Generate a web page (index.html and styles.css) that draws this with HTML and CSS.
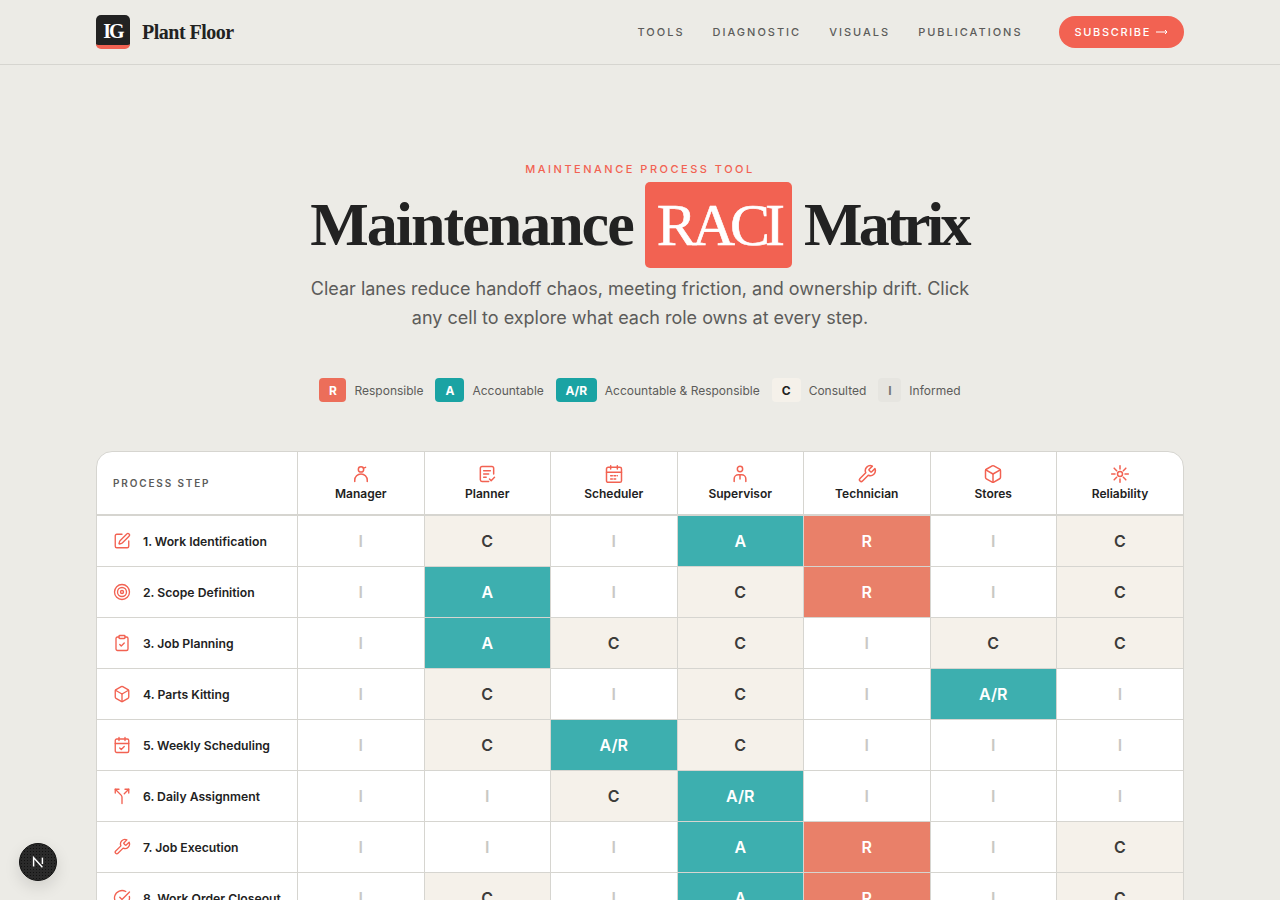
FILE: index.html

```html
<!doctype html>
<html lang="en">
<head>
    <meta charset="UTF-8">
    <meta name="viewport" content="width=device-width, initial-scale=1.0">
    <title>Maintenance RACI Matrix</title>
    <link rel="stylesheet" href="styles.css">
</head>
<body>

<header class="topbar">
    <a class="brand" href="#">
        <span class="brand-mark">IG</span>
        <span class="brand-name">Plant Floor</span>
    </a>
    <nav class="nav">
        <a href="#">TOOLS</a>
        <a href="#">DIAGNOSTIC</a>
        <a href="#">VISUALS</a>
        <a href="#">PUBLICATIONS</a>
        <a class="subscribe" href="#">SUBSCRIBE
            <svg class="subscribe-arrow" viewBox="0 0 12 8"><path d="M0 4h11M9 2l2 2-2 2"/></svg>
        </a>
    </nav>
</header>

<section class="hero">
    <p class="eyebrow">MAINTENANCE PROCESS TOOL</p>
    <h1 class="title"><span class="word-long">Maintenance</span> <span class="title-mark">RACI</span> <span class="word-short">Matrix</span></h1>
    <p class="lead">Clear lanes reduce handoff chaos, meeting friction, and ownership drift. Click any cell to explore what each role owns at every step.</p>
</section>

<div class="legend">
    <span class="chip chip-r">R</span><span class="legend-label">Responsible</span>
    <span class="chip chip-a">A</span><span class="legend-label">Accountable</span>
    <span class="chip chip-a chip-wide">A/R</span><span class="legend-label">Accountable &amp; Responsible</span>
    <span class="chip chip-c">C</span><span class="legend-label">Consulted</span>
    <span class="chip chip-i">I</span><span class="legend-label">Informed</span>
</div>

<main class="matrix-wrap">
    <table class="matrix">
        <thead>
        <tr>
            <th class="step-head">PROCESS STEP</th>
            <th><svg class="icon" viewBox="0 0 24 24"><circle cx="12" cy="6.500" r="3.200"/><path d="M15 5l2.500-1"/><path d="M4.500 21v-1.500a7.500 7.500 0 0 1 15 0v1.500"/></svg>Manager</th>
            <th><svg class="icon" viewBox="0 0 24 24"><path d="M20 12V5a2 2 0 0 0-2-2H6a2 2 0 0 0-2 2v14a2 2 0 0 0 2 2h8"/><path d="M8 8h8M8 12h6M8 16h3"/><path d="m15 18 2 2 4-4"/></svg>Planner</th>
            <th><svg class="icon" viewBox="0 0 24 24"><path d="M8 2v4M16 2v4"/><rect x="3" y="4" width="18" height="18" rx="2"/><path d="M3 10h18M8 14h2M12 14h2M16 14h.01M8 18h2M12 18h2"/></svg>Scheduler</th>
            <th><svg class="icon" viewBox="0 0 24 24"><circle cx="12" cy="6" r="3.200"/><path d="M5 21v-3a5 5 0 0 1 5-5h4a5 5 0 0 1 5 5v3"/><path d="M12 13v5"/></svg>Supervisor</th>
            <th><svg class="icon" viewBox="0 0 24 24"><use href="#i-wrench"/></svg>Technician</th>
            <th><svg class="icon" viewBox="0 0 24 24"><use href="#i-box"/></svg>Stores</th>
            <th><svg class="icon" viewBox="0 0 24 24"><circle cx="12" cy="12" r="3"/><path d="M12 2v4M12 18v4M2 12h4M18 12h4M5 5l3 3M16 16l3 3M5 19l3-3M16 8l3-3"/></svg>Reliability</th>
        </tr>
        </thead>
        <tbody>
        <tr>
            <td class="step"><div class="step-in"><svg class="icon step-icon" viewBox="0 0 24 24"><path d="M12 3H5a2 2 0 0 0-2 2v14a2 2 0 0 0 2 2h14a2 2 0 0 0 2-2v-7"/><path d="M18.375 2.625a1 1 0 0 1 3 3l-9.013 9.014a2 2 0 0 1-.853.505l-2.873.84a.5.5 0 0 1-.62-.62l.84-2.873a2 2 0 0 1 .506-.852z"/></svg>1. Work Identification</div></td>
            <td class="i">I</td><td class="c">C</td><td class="i">I</td><td class="a">A</td><td class="r">R</td><td class="i">I</td><td class="c">C</td>
        </tr>
        <tr>
            <td class="step"><div class="step-in"><svg class="icon step-icon" viewBox="0 0 24 24"><circle cx="12" cy="12" r="10"/><circle cx="12" cy="12" r="6"/><circle cx="12" cy="12" r="2"/></svg>2. Scope Definition</div></td>
            <td class="i">I</td><td class="a">A</td><td class="i">I</td><td class="c">C</td><td class="r">R</td><td class="i">I</td><td class="c">C</td>
        </tr>
        <tr>
            <td class="step"><div class="step-in"><svg class="icon step-icon" viewBox="0 0 24 24"><rect x="8" y="2" width="8" height="4" rx="1"/><path d="M16 4h2a2 2 0 0 1 2 2v14a2 2 0 0 1-2 2H6a2 2 0 0 1-2-2V6a2 2 0 0 1 2-2h2"/><path d="m9 14 2 2 4-4"/></svg>3. Job Planning</div></td>
            <td class="i">I</td><td class="a">A</td><td class="c">C</td><td class="c">C</td><td class="i">I</td><td class="c">C</td><td class="c">C</td>
        </tr>
        <tr>
            <td class="step"><div class="step-in"><svg class="icon step-icon" viewBox="0 0 24 24"><use href="#i-box"/></svg>4. Parts Kitting</div></td>
            <td class="i">I</td><td class="c">C</td><td class="i">I</td><td class="c">C</td><td class="i">I</td><td class="a">A/R</td><td class="i">I</td>
        </tr>
        <tr>
            <td class="step"><div class="step-in"><svg class="icon step-icon" viewBox="0 0 24 24"><path d="M8 2v4M16 2v4"/><rect x="3" y="4" width="18" height="18" rx="2"/><path d="M3 10h18"/><path d="m9 16 2 2 4-4"/></svg>5. Weekly Scheduling</div></td>
            <td class="i">I</td><td class="c">C</td><td class="a">A/R</td><td class="c">C</td><td class="i">I</td><td class="i">I</td><td class="i">I</td>
        </tr>
        <tr>
            <td class="step"><div class="step-in"><svg class="icon step-icon" viewBox="0 0 24 24"><path d="M16 3h5v5"/><path d="M8 3H3v5"/><path d="M12 22v-8.300a4 4 0 0 0-1.172-2.872L3 3"/><path d="m15 9 6-6"/></svg>6. Daily Assignment</div></td>
            <td class="i">I</td><td class="i">I</td><td class="c">C</td><td class="a">A/R</td><td class="i">I</td><td class="i">I</td><td class="i">I</td>
        </tr>
        <tr>
            <td class="step"><div class="step-in"><svg class="icon step-icon" viewBox="0 0 24 24"><use href="#i-wrench"/></svg>7. Job Execution</div></td>
            <td class="i">I</td><td class="i">I</td><td class="i">I</td><td class="a">A</td><td class="r">R</td><td class="i">I</td><td class="c">C</td>
        </tr>
        <tr>
            <td class="step"><div class="step-in"><svg class="icon step-icon" viewBox="0 0 24 24"><path d="M21.801 10A10 10 0 1 1 17 3.335"/><path d="m9 11 3 3L22 4"/></svg>8. Work Order Closeout</div></td>
            <td class="i">I</td><td class="c">C</td><td class="i">I</td><td class="a">A</td><td class="r">R</td><td class="i">I</td><td class="c">C</td>
        </tr>
        </tbody>
    </table>
</main>

<!-- shared icon shapes -->
<svg class="icon-defs" width="0" height="0">
    <defs>
        <g id="i-wrench"><path d="M14.700 6.300a1 1 0 0 0 0 1.400l1.600 1.600a1 1 0 0 0 1.400 0l3.770-3.770a6 6 0 0 1-7.940 7.940l-6.910 6.910a2.120 2.120 0 0 1-3-3l6.910-6.910a6 6 0 0 1 7.940-7.940l-3.760 3.760z"/></g>
        <g id="i-box"><path d="M21 8a2 2 0 0 0-1-1.730l-7-4a2 2 0 0 0-2 0l-7 4A2 2 0 0 0 3 8v8a2 2 0 0 0 1 1.730l7 4a2 2 0 0 0 2 0l7-4A2 2 0 0 0 21 16Z"/><path d="m3.300 7 8.700 5 8.700-5"/><path d="M12 22V12"/></g>
    </defs>
</svg>

<button class="dev-badge" aria-label="Next dev tools">
    <svg viewBox="0 0 20 20"><path d="M4.500 15.500v-11l11 12"/><path d="M15.500 4.500v8"/></svg>
</button>

</body>
</html>
```

FILE: styles.css

```css
html, body {
    margin: 0;
    padding: 0;
}
body {
    background: #ecebe6;
    color: #222;
    font-family: Inter, "Liberation Sans", sans-serif;
    padding-bottom: 60px;
}
a {
    text-decoration: none;
    color: inherit;
}

/* top bar */
.topbar {
    height: 64px;
    border-bottom: 1px solid #d6d5d0;
    padding: 0 96px;
    display: flex;
    align-items: center;
    justify-content: space-between;
}
.brand {
    display: flex;
    align-items: center;
    gap: 12px;
}
.brand-mark {
    width: 34px;
    height: 34px;
    box-sizing: border-box;
    padding-top: 3px;
    border-radius: 5px;
    background: #222;
    border-bottom: 4px solid #f26252;
    color: #fff;
    font-family: "Liberation Serif", serif;
    font-weight: 700;
    font-size: 20px;
    letter-spacing: -2px;
    display: flex;
    align-items: center;
    justify-content: center;
}
.brand-name {
    font-family: "Liberation Serif", serif;
    font-weight: 700;
    font-size: 20px;
    letter-spacing: -0.5px;
    color: #222;
}
.nav {
    display: flex;
    align-items: center;
    gap: 28px;
    font-size: 11px;
    font-weight: 500;
    letter-spacing: 2px;
    color: #5c5c5a;
}
.subscribe {
    margin-left: 8px;
    height: 32px;
    padding: 0 16px;
    border-radius: 16px;
    background: #f26252;
    color: #fff;
    letter-spacing: 1.65px;
    display: flex;
    align-items: center;
    gap: 5px;
}
.subscribe-arrow {
    width: 12px;
    height: 8px;
    fill: none;
    stroke: #fff;
    stroke-width: 1;
}

/* hero */
.hero {
    padding-top: 97px;
    text-align: center;
}
.eyebrow {
    margin: 0;
    font-size: 11px;
    line-height: 14px;
    font-weight: 500;
    letter-spacing: 2.5px;
    color: #f26252;
}
.title {
    margin: 5px 0 0;
    padding-right: 2px;
    font-family: "Liberation Serif", serif;
    font-weight: 700;
    font-size: 62px;
    line-height: 86px;
    word-spacing: -3.500px;
    color: #222;
}
.word-long {
    letter-spacing: -2px;
}
.word-short {
    letter-spacing: -3.700px;
}
.title-mark {
    display: inline-block;
    padding: 0 12px;
    border-radius: 5px;
    background: #f26252;
    color: #fff;
    font-size: 60px;
    font-weight: 400;
    letter-spacing: -5px;
    -webkit-text-stroke: 0.6px #fff;
}
.lead {
    width: 680px;
    margin: 6px auto 0;
    font-size: 18px;
    line-height: 29px;
    color: #5c5c5a;
}

/* legend */
.legend {
    margin-top: 46px;
    display: flex;
    justify-content: center;
    align-items: center;
    font-size: 12px;
    color: #5c5c5a;
}
.chip {
    height: 24px;
    width: 29px;
    border-radius: 4px;
    display: flex;
    align-items: center;
    justify-content: center;
    font-size: 12px;
    font-weight: 700;
    margin-right: 8px;
}
.chip-r {
    background: #ec6e5a;
    color: #fff;
    width: 27px;
}
.chip-a {
    background: #1aa3a3;
    color: #fff;
}
.chip-wide {
    width: 41px;
}
.chip-c {
    background: #f5f1ea;
    color: #222;
}
.chip-i {
    background: #e6e5e0;
    color: #777;
    width: 23px;
}
.legend-label {
    margin-right: 12px;
}
.legend-label:last-child {
    margin-right: 0;
}

/* matrix */
.matrix-wrap {
    margin: 49px 96px 0;
    border: 1px solid #d6d5d0;
    border-radius: 16px;
    overflow: hidden;
    background: #fff;
}
.matrix {
    width: 100%;
    table-layout: fixed;
    border-collapse: collapse;
}
.matrix th {
    height: 60px;
    padding: 0 0 2px;
    border-left: 1px solid #d6d5d0;
    border-bottom: 2px solid #d6d5d0;
    font-size: 12px;
    line-height: 15px;
    font-weight: 600;
    color: #222;
    vertical-align: middle;
}
.matrix th:first-child {
    width: 184px;
    border-left: 0;
}
.matrix th .icon {
    display: block;
    width: 20px;
    height: 20px;
    margin: 0 auto 2px;
}
.matrix th.step-head {
    padding: 0 0 0 16px;
    text-align: left;
    font-size: 10px;
    font-weight: 600;
    letter-spacing: 1.85px;
    color: #5c5c5a;
}
.icon {
    width: 18px;
    height: 18px;
    fill: none;
    stroke: #f26252;
    stroke-width: 1.800;
    stroke-linecap: round;
    stroke-linejoin: round;
}
.icon-defs {
    position: absolute;
}
.matrix td {
    height: 50px;
    padding: 0;
    border-left: 1px solid #d6d5d0;
    border-bottom: 1px solid #d6d5d0;
    text-align: center;
    font-size: 16px;
    font-weight: 600;
}
.matrix td.step {
    border-left: 0;
    padding-left: 16px;
    text-align: left;
    font-size: 12.200px;
    font-weight: 600;
    color: #222;
}
.step-in {
    display: flex;
    align-items: center;
    gap: 12px;
}
.step-icon {
    flex: none;
}
.matrix td.a {
    background: #3dafaf;
    color: #fff;
}
.matrix td.r {
    background: #e98069;
    color: #fff;
}
.matrix td.c {
    background: #f5f1ea;
    color: #3c3c3a;
}
.matrix td.i {
    color: #c9c8c4;
}

/* floating dev badge */
.dev-badge {
    position: fixed;
    left: 19px;
    bottom: 19px;
    width: 38px;
    height: 38px;
    padding: 0;
    border-radius: 50%;
    border: 1px solid #111;
    background-color: #2a2a2a;
    background-image: radial-gradient(#111 0.7px, transparent 0.8px);
    background-size: 3px 3px;
    box-shadow: 0 6px 16px rgba(0, 0, 0, 0.12);
    display: flex;
    align-items: center;
    justify-content: center;
}
.dev-badge svg {
    width: 16px;
    height: 16px;
    fill: none;
    stroke: #fff;
    stroke-width: 1.800;
}
```
